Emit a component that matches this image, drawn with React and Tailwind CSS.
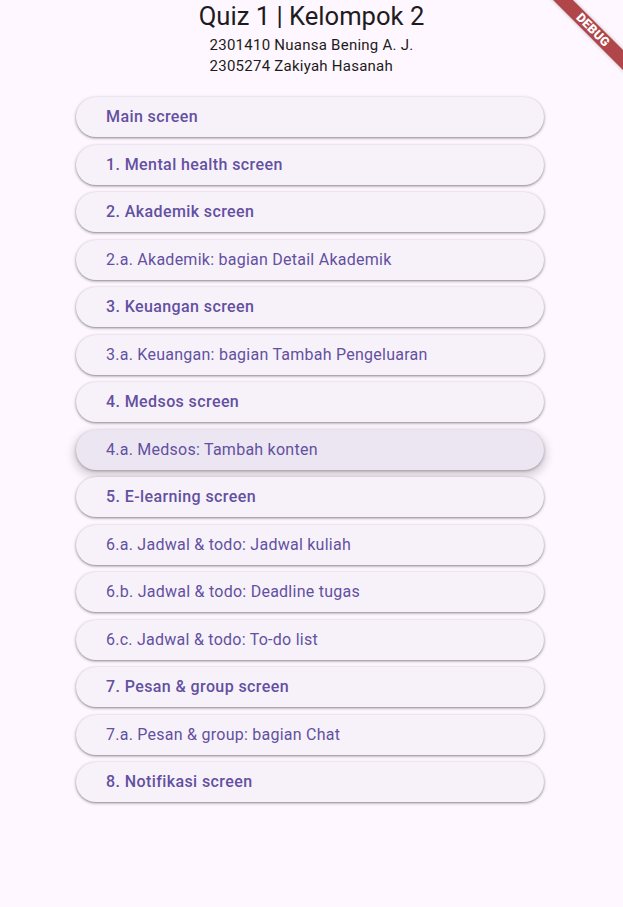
import React from 'react';

const items = [
  { label: 'Main screen', bold: true },
  { label: '1. Mental health screen', bold: true },
  { label: '2. Akademik screen', bold: true },
  { label: '2.a. Akademik: bagian Detail Akademik' },
  { label: '3. Keuangan screen', bold: true },
  { label: '3.a. Keuangan: bagian Tambah Pengeluaran' },
  { label: '4. Medsos screen', bold: true },
  { label: '4.a. Medsos: Tambah konten', hover: true },
  { label: '5. E-learning screen', bold: true },
  { label: '6.a. Jadwal & todo: Jadwal kuliah' },
  { label: '6.b. Jadwal & todo: Deadline tugas' },
  { label: '6.c. Jadwal & todo: To-do list' },
  { label: '7. Pesan & group screen', bold: true },
  { label: '7.a. Pesan & group: bagian Chat' },
  { label: '8. Notifikasi screen', bold: true },
];

export default function App() {
  return (
    <main className="relative min-h-[907px] overflow-hidden bg-[#fef7ff] font-['Roboto',sans-serif]">
      <div className="flex flex-col items-center">
        <h1 className="text-[25.6px] leading-[33px] text-[#1d1b20]">Quiz 1 | Kelompok 2</h1>
        <div className="mt-[2px] text-[15px] leading-[21px] tracking-[0.25px] text-[#1d1b20]">
          <p>2301410 Nuansa Bening A. J.</p>
          <p>2305274 Zakiyah Hasanah</p>
        </div>
      </div>

      <div className="ml-[76px] mt-[20px] flex w-[468px] flex-col gap-[7.5px]">
        {items.map((item) => (
          <button
            key={item.label}
            className={`flex h-10 w-full items-center rounded-full pl-[30px] text-left text-[16px] text-[#6350a0] ${
              item.hover
                ? 'bg-[#ece6f3] shadow-[0_1px_3px_rgba(0,0,0,0.3),0_4px_8px_3px_rgba(0,0,0,0.15)]'
                : 'bg-[#f7f2fa] shadow-[0_1px_2px_rgba(0,0,0,0.3),0_1px_3px_1px_rgba(0,0,0,0.15)]'
            } ${item.bold ? 'font-medium tracking-[0.4px]' : 'tracking-[0.25px]'}`}
          >
            {item.label}
          </button>
        ))}
      </div>

      {/* debug ribbon */}
      <div className="pointer-events-none absolute right-[-35px] top-[23px] w-[130px] rotate-45 bg-[#b0454a] text-center text-[12.5px] font-black leading-[14px] tracking-[0.3px] text-white shadow-[0_0_4px_rgba(0,0,0,0.25)]">
        DEBUG
      </div>
    </main>
  );
}
